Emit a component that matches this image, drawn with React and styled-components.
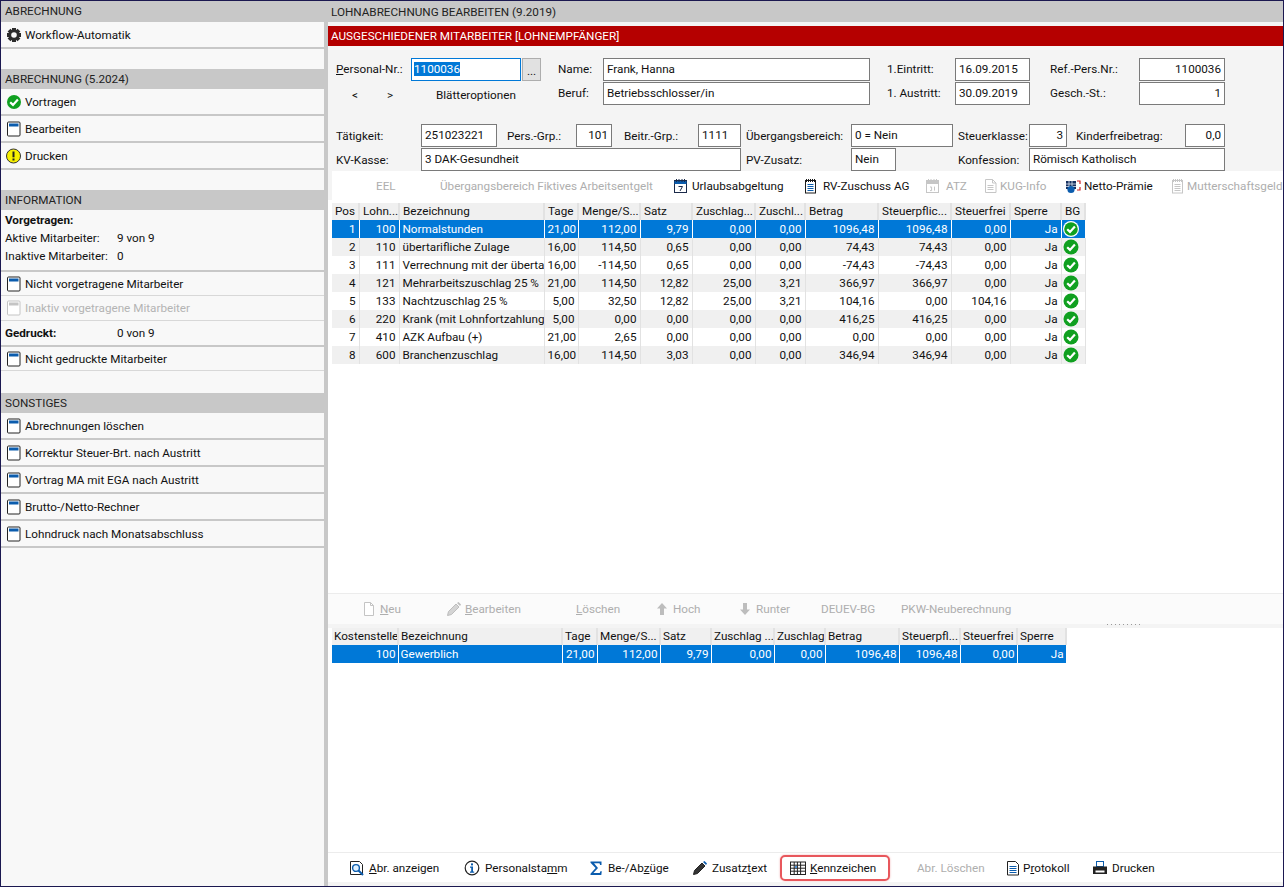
import React from "react";
import styled, { createGlobalStyle } from "styled-components";

const GlobalStyle = createGlobalStyle`
  html, body {
    margin: 0;
    padding: 0;
    height: 100%;
    overflow: hidden;
    background: #fff;
  }
  * { box-sizing: border-box; }
  #root { height: 100%; }
  u { text-underline-offset: 1px; }
`;

const Frame = styled.div`
  width: 1284px;
  height: 887px;
  display: flex;
  border: 1px solid #1b1850;
  font-family: Roboto, "Liberation Sans", sans-serif;
  font-size: 11.7px;
  color: #111;
  background: #c8c8c8;
  overflow: hidden;
`;

/* left column */
const Sidebar = styled.aside`
  width: 323px;
  flex: none;
  display: flex;
  flex-direction: column;
  background: #c8c8c8;
`;

const SideHeader = styled.div`
  height: ${(p) => p.$h || 20}px;
  flex: none;
  padding: 0 0 1px 4px;
  display: flex;
  align-items: center;
  color: #222;
`;

const SideRow = styled.div`
  height: ${(p) => p.$h || 25}px;
  flex: none;
  display: flex;
  align-items: center;
  gap: 3px;
  padding-left: 5px;
  margin-bottom: ${(p) => (p.$thin ? 1 : 2)}px;
  background: #f8f8f8;
  color: ${(p) => (p.$off ? "#b4b4b4" : "#111")};
  ${(p) => p.$thin && "box-shadow: 0 1px 0 #d8d8d8;"}
`;

const SideGap = styled.div`
  height: ${(p) => p.$h}px;
  flex: ${(p) => (p.$grow ? 1 : "none")};
  background: #f8f8f8;
`;

const InfoBlock = styled.div`
  height: 60px;
  flex: none;
  margin-bottom: 2px;
  padding: 1px 4px 0;
  background: #f8f8f8;
  display: flex;
  flex-direction: column;
`;

const InfoLine = styled.div`
  height: 18px;
  display: flex;
  align-items: center;
`;

const InfoKey = styled.span`
  width: ${(p) => p.$w || 112}px;
  font-weight: ${(p) => (p.$bold ? 700 : 400)};
`;

const GedrucktRow = styled(SideRow)`
  gap: 0;
  padding-left: 4px;
`;

/* right column */
const Main = styled.main`
  flex: 1;
  min-width: 0;
  display: flex;
  flex-direction: column;
`;

const MainTitle = styled.div`
  height: 21px;
  flex: none;
  padding-left: 7px;
  display: flex;
  align-items: center;
  color: #222;
`;

const Panel = styled.div`
  flex: 1;
  min-height: 0;
  margin-left: 4px;
  display: flex;
  flex-direction: column;
  background: #f4f4f4;
  padding-top: 4px;
`;

const RedBar = styled.div`
  height: 20px;
  flex: none;
  padding-left: 3px;
  display: flex;
  align-items: center;
  background: #b50000;
  color: #fff;
`;

const FormArea = styled.div`
  flex: none;
  height: 125px;
  padding: 8px 0 0 8px;
  border-top: 4px solid #f8f8f8;
  display: flex;
  flex-direction: column;
  gap: 1px;
`;

const Label = styled.span`
  flex: none;
  width: ${(p) => p.$w}px;
  white-space: nowrap;
`;

const FieldRow = styled.div`
  height: 23px;
  display: flex;
  align-items: center;

  ${Label} {
    margin-top: ${(p) => (p.$up ? -2 : 1)}px;
  }
`;

const Rule = styled.div`
  height: 1px;
  margin: 8px 0 9px -4px;
  background: #ececec;
`;

const Field = styled.div`
  flex: none;
  width: ${(p) => p.$w}px;
  height: 23px;
  margin-right: ${(p) => p.$mr || 0}px;
  padding: 0 3px 2px;
  display: flex;
  align-items: center;
  justify-content: ${(p) => (p.$right ? "flex-end" : "flex-start")};
  border: 1px solid ${(p) => (p.$focus ? "#0078d7" : "#7a7a7a")};
  background: #fff;
  white-space: nowrap;
`;

const Selected = styled.span`
  background: #0078d7;
  color: #fff;
  margin-left: -1px;
`;

const DotsButton = styled.div`
  flex: none;
  width: 19px;
  height: 23px;
  margin: 0 17px 0 1px;
  border: 1px solid #adadad;
  background: #e1e1e1;
  display: flex;
  align-items: flex-end;
  justify-content: center;
  padding-bottom: 4px;
  line-height: 10px;
`;

const PageLink = styled.span`
  flex: none;
  width: ${(p) => p.$w}px;
  margin-top: 3px;
  white-space: nowrap;
`;

const ToolBar = styled.div`
  flex: none;
  height: ${(p) => p.$h}px;
  margin-left: ${(p) => p.$ml || 0}px;
  padding-left: ${(p) => p.$pl}px;
  display: flex;
  align-items: center;
  background: ${(p) => p.$bg || "#fff"};
  white-space: nowrap;
  overflow: hidden;
  ${(p) => p.$line && "border-top: 1px solid #ececec;"}
`;

const ToolItem = styled.div`
  flex: none;
  display: flex;
  align-items: center;
  gap: ${(p) => p.$gap ?? 3}px;
  width: ${(p) => p.$w}px;
  color: ${(p) => (p.$off ? "#aeaeae" : "#111")};
`;

const MarkedItem = styled(ToolItem)`
  height: 26px;
  margin: 0 27px 0 -9px;
  padding-left: 8px;
  width: 110px;
  border: 2px solid #e8575c;
  border-radius: 5px;
  box-shadow: 0 0 2px rgba(232, 87, 92, 0.5);
`;

const GridArea = styled.div`
  flex: ${(p) => (p.$grow ? 1 : "none")};
  height: ${(p) => p.$h || "auto"};
  padding: ${(p) => p.$pad};
  background: #fff;
`;

const Table = styled.table`
  table-layout: fixed;
  border-collapse: collapse;
  width: ${(p) => p.$w}px;
  font-size: 11.7px;
`;

const Th = styled.th`
  height: 17px;
  padding: 0 1px 1px ${(p) => (p.$tight ? 2 : 3)}px;
  font-weight: 400;
  text-align: left;
  background: #f0f0f0;
  border-right: 2px solid #e2e2e2;
  overflow: hidden;
  white-space: nowrap;
`;

const Td = styled.td`
  height: 18px;
  padding: 0 ${(p) => (p.$left ? 0 : p.$tight ? 2 : 3)}px 0 ${(p) => (p.$tight ? 2 : 3)}px;
  text-align: ${(p) => (p.$left ? "left" : "right")};
  border-right: 1px solid ${(p) => (p.$sel ? "#fff" : "#e2e2e2")};
  overflow: hidden;
  white-space: nowrap;
`;

const IconCell = styled(Td)`
  padding: 0 0 0 1px;
  line-height: 0;
`;

const Tr = styled.tr`
  background: ${(p) => (p.$sel ? "#0078d7" : p.$alt ? "#f0f0f0" : "#fff")};
  color: ${(p) => (p.$sel ? "#fff" : "#111")};
`;

const Splitter = styled.div`
  flex: none;
  height: 4px;
  background: #f4f4f4;
  display: flex;
  justify-content: flex-end;
  padding-right: 140px;
`;

const Grip = styled.div`
  width: 36px;
  height: 1px;
  background-image: linear-gradient(90deg, #999 1px, transparent 1px);
  background-size: 4px 1px;
`;

const BottomGap = styled.div`
  flex: none;
  height: 4px;
  background: #f4f4f4;
`;

/* icons */
const IconSvg = styled.svg`
  flex: none;
  display: block;
`;

const Svg = ({ children }) => (
  <IconSvg width={16} height={16} viewBox="0 0 16 16">
    {children}
  </IconSvg>
);

const WindowIcon = ({ off }) => (
  <Svg>
    <rect x="1.5" y="1" width="12.5" height="14" rx="1" fill="#fff" stroke={off ? "#c4c4c4" : "#222"} />
    <rect x="3" y="2.5" width="9.5" height="3" fill={off ? "#c4c4c4" : "#0b5cad"} />
  </Svg>
);

const CheckIcon = ({ ring, big }) => (
  <Svg>
    {ring && <circle cx="8" cy="8" r="8" fill="#fff" />}
    <circle cx="8" cy="8" r={ring ? 6.8 : big ? 7.5 : 7} fill="#10a020" />
    <path d="M4.2 8.2 7 10.9 11.9 5.5" fill="none" stroke="#fff" strokeWidth="2.2" />
  </Svg>
);

const WarnIcon = () => (
  <Svg>
    <circle cx="7.5" cy="8" r="7" fill="#f7f000" stroke="#333" />
    <rect x="6.5" y="3.5" width="2" height="5.8" fill="#222" />
    <rect x="6.5" y="10.5" width="2" height="2" fill="#222" />
  </Svg>
);

const GearIcon = () => (
  <Svg>
    <g fill="#2b2b2b">
      {[0, 45, 90, 135].map((r) => (
        <rect key={r} x="6" y="1" width="4" height="14" transform={`rotate(${r} 8 8)`} />
      ))}
      <circle cx="8" cy="8" r="5.4" />
    </g>
    <circle cx="8" cy="8" r="2.8" fill="#f8f8f8" />
  </Svg>
);

const CalendarIcon = ({ off }) => {
  const c = off ? "#c6c6c6" : "#1b2a4a";
  return (
    <Svg>
      <rect x="1.5" y="2.5" width="12" height="12" fill="#fff" stroke={c} />
      <rect x="1.5" y="3" width="12" height="3" fill={off ? "#c6c6c6" : "#0b5cad"} />
      <path d="M3.5 1v3M6 1v3M9 1v3M11.5 1v3" stroke={c} />
      {off ? (
        <path d="M5 9h1.6v3.6H5M9.5 8.6v4" stroke={c} fill="none" />
      ) : (
        <path d="M5.5 8.5h4L7 13" stroke={c} fill="none" />
      )}
    </Svg>
  );
};

const NoteIcon = ({ off, blue }) => {
  const c = off ? "#c6c6c6" : "#1b1b1b";
  return (
    <Svg>
      <rect x="2.5" y="2.5" width="10" height="12.5" fill="#fff" stroke={c} />
      <path d="M3.5 1v3M5.5 1v3M7.5 1v3M9.5 1v3M11.5 1v3" stroke={c} />
      <path d="M4.5 6.5h6M4.5 8.5h6M4.5 10.5h6M4.5 12.5h6" stroke={off ? c : blue ? "#0b5cad" : c} />
    </Svg>
  );
};

const PageIcon = ({ off }) => {
  const c = off ? "#c6c6c6" : "#222";
  return (
    <Svg>
      <path d="M2.5 1.5h7l3.5 3.5v9.5H2.5z" fill="#fff" stroke={c} />
      <path d="M9.5 1.5V5H13M4.5 7.5h6M4.5 9.5h6M4.5 11.5h6" fill="none" stroke={c} />
    </Svg>
  );
};

const NettoIcon = () => (
  <Svg>
    <rect x="1" y="3" width="10" height="8" fill="#16305f" />
    <path d="M4 3v8M7 3v8M1 6h10M1 8.5h10" stroke="#dfe8f5" strokeWidth="0.8" />
    <circle cx="6" cy="11.5" r="3.6" fill="#0b5cad" />
    <path d="M12 3h3v3M15 9v3h-3" stroke="#c22" strokeWidth="1.2" fill="none" />
  </Svg>
);

const NewPageIcon = () => (
  <Svg>
    <path d="M3.5 1.5h6l3 3v10h-9z" fill="#fff" stroke="#c4c4c4" />
    <path d="M9.5 1.5v3h3" fill="none" stroke="#c4c4c4" />
  </Svg>
);

const PencilIcon = ({ off }) => (
  <Svg>
    <path d="M1.5 14.5l1-4 7.5-7.5 3 3-7.5 7.5z" fill={off ? "#d4d4d4" : "#333"} stroke={off ? "#bdbdbd" : "#222"} />
    <path d="M11 2l1.5-1 2.5 2.5-1 1.5z" fill={off ? "#bdbdbd" : "#0b5cad"} />
  </Svg>
);

const ArrowIcon = ({ down }) => (
  <Svg>
    <path
      d="M8 2 13 7.5H10V14H6V7.5H3z"
      fill="#bdbdbd"
      transform={down ? "rotate(180 8 8)" : undefined}
    />
  </Svg>
);

const PreviewIcon = () => (
  <Svg>
    <path d="M1.5 1.5h9l3 3v10h-12z" fill="#fff" stroke="#222" />
    <circle cx="7" cy="8" r="3.4" fill="#dff0ff" stroke="#0b5cad" strokeWidth="1.4" />
    <path d="M9.5 10.5 14 15" stroke="#0b5cad" strokeWidth="2" />
  </Svg>
);

const InfoIcon = () => (
  <Svg>
    <circle cx="8" cy="8" r="6.8" fill="#fff" stroke="#222" strokeWidth="1.2" />
    <rect x="7" y="3.4" width="2" height="2" fill="#0b5cad" />
    <path d="M6 6.6h3v5h1.2v1.2H6v-1.2h1.2V7.8H6z" fill="#0b5cad" />
  </Svg>
);

const SigmaIcon = () => (
  <Svg>
    <path d="M1.5 1.5h11v3.4h-1.4l-.6-1.6H5l4 4.7-4.6 5h6.3l.7-1.8h1.4l-.5 3.8H1.5v-1.2L6.6 8 1.5 2.7z" fill="#0b5cad" />
  </Svg>
);

const GridIcon = () => (
  <Svg>
    <rect x="0.5" y="2" width="15" height="12.5" fill="#fff" stroke="#222" />
    <path d="M1 5.2h14M1 8.2h14M1 11.2h14M4.2 2v12.5M7.4 2v12.5M10.6 2v12.5" stroke="#222" />
    <rect x="5" y="6" width="2" height="2" fill="#4a90d9" />
  </Svg>
);

const ReportIcon = () => (
  <Svg>
    <path d="M2.5 1.5h8l3 3v10.5h-11z" fill="#fff" stroke="#222" />
    <path d="M4.5 6.5h7M4.5 8.5h7M4.5 10.5h7M4.5 12.5h7" stroke="#0b5cad" />
  </Svg>
);

const PrintIcon = () => (
  <Svg>
    <rect x="4.5" y="1.5" width="7" height="5" fill="#fff" stroke="#0b5cad" />
    <rect x="1" y="6.5" width="14" height="7.5" fill="#222" />
    <rect x="3.5" y="10.5" width="9" height="2" fill="#fff" />
  </Svg>
);

/* table data */
const lohnCols = [27, 40, 145, 34, 62, 52, 63, 50, 73, 73, 59, 51, 24];
const lohnHead = ["Pos", "Lohn...", "Bezeichnung", "Tage", "Menge/S...", "Satz", "Zuschlag...", "Zuschl...", "Betrag", "Steuerpflic...", "Steuerfrei", "Sperre", "BG"];
const lohnRows = [
  ["1", "100", "Normalstunden", "21,00", "112,00", "9,79", "0,00", "0,00", "1096,48", "1096,48", "0,00", "Ja"],
  ["2", "110", "übertarifliche Zulage", "16,00", "114,50", "0,65", "0,00", "0,00", "74,43", "74,43", "0,00", "Ja"],
  ["3", "111", "Verrechnung mit der übertariflichen Zulage", "16,00", "-114,50", "0,65", "0,00", "0,00", "-74,43", "-74,43", "0,00", "Ja"],
  ["4", "121", "Mehrarbeitszuschlag 25 %", "21,00", "114,50", "12,82", "25,00", "3,21", "366,97", "366,97", "0,00", "Ja"],
  ["5", "133", "Nachtzuschlag 25 %", "5,00", "32,50", "12,82", "25,00", "3,21", "104,16", "0,00", "104,16", "Ja"],
  ["6", "220", "Krank (mit Lohnfortzahlung)", "5,00", "0,00", "0,00", "0,00", "0,00", "416,25", "416,25", "0,00", "Ja"],
  ["7", "410", "AZK Aufbau (+)", "21,00", "2,65", "0,00", "0,00", "0,00", "0,00", "0,00", "0,00", "Ja"],
  ["8", "600", "Branchenzuschlag", "16,00", "114,50", "3,03", "0,00", "0,00", "346,94", "346,94", "0,00", "Ja"],
];

const kostCols = [66, 164, 35, 63, 51, 63, 51, 74, 61, 57, 49];
const kostHead = ["Kostenstelle", "Bezeichnung", "Tage", "Menge/S...", "Satz", "Zuschlag ...", "Zuschlag", "Betrag", "Steuerpfl...", "Steuerfrei", "Sperre"];
const kostRow = ["100", "Gewerblich", "21,00", "112,00", "9,79", "0,00", "0,00", "1096,48", "1096,48", "0,00", "Ja"];

const sum = (a) => a.reduce((x, y) => x + y, 0);

const Colgroup = ({ cols }) => (
  <colgroup>
    {cols.map((w, i) => (
      <col key={i} width={w} />
    ))}
  </colgroup>
);

export default function App() {
  return (
    <>
      <GlobalStyle />
      <Frame>
        <Sidebar>
          <SideHeader $h={21}>ABRECHNUNG</SideHeader>
          <SideRow><GearIcon /> Workflow-Automatik</SideRow>
          <SideGap $h={20} />
          <SideHeader>ABRECHNUNG (5.2024)</SideHeader>
          <SideRow><CheckIcon /> Vortragen</SideRow>
          <SideRow><WindowIcon /> Bearbeiten</SideRow>
          <SideRow><WarnIcon /> Drucken</SideRow>
          <SideGap $h={20} />
          <SideHeader>INFORMATION</SideHeader>
          <InfoBlock>
            <InfoLine><InfoKey $bold>Vorgetragen:</InfoKey></InfoLine>
            <InfoLine><InfoKey>Aktive Mitarbeiter:</InfoKey> 9 von 9</InfoLine>
            <InfoLine><InfoKey>Inaktive Mitarbeiter:</InfoKey> 0</InfoLine>
          </InfoBlock>
          <SideRow $h={23} $thin><WindowIcon /> Nicht vorgetragene Mitarbeiter</SideRow>
          <SideRow $h={24} $thin $off><WindowIcon off /> Inaktiv vorgetragene Mitarbeiter</SideRow>
          <GedrucktRow $h={24}>
            <InfoKey $bold>Gedruckt:</InfoKey> 0 von 9
          </GedrucktRow>
          <SideRow $h={23} $thin><WindowIcon /> Nicht gedruckte Mitarbeiter</SideRow>
          <SideGap $h={22} />
          <SideHeader>SONSTIGES</SideHeader>
          <SideRow><WindowIcon /> Abrechnungen löschen</SideRow>
          <SideRow><WindowIcon /> Korrektur Steuer-Brt. nach Austritt</SideRow>
          <SideRow><WindowIcon /> Vortrag MA mit EGA nach Austritt</SideRow>
          <SideRow><WindowIcon /> Brutto-/Netto-Rechner</SideRow>
          <SideRow><WindowIcon /> Lohndruck nach Monatsabschluss</SideRow>
          <SideGap $grow />
        </Sidebar>

        <Main>
          <MainTitle>LOHNABRECHNUNG BEARBEITEN (9.2019)</MainTitle>
          <Panel>
            <RedBar>AUSGESCHIEDENER MITARBEITER [LOHNEMPFÄNGER]</RedBar>
            <FormArea>
              <FieldRow $up>
                <Label $w={75}><u>P</u>ersonal-Nr.:</Label>
                <Field $w={110} $focus><Selected>1100036</Selected></Field>
                <DotsButton>...</DotsButton>
                <Label $w={45}>Name:</Label>
                <Field $w={267} $mr={17}>Frank, Hanna</Field>
                <Label $w={68}>1.Eintritt:</Label>
                <Field $w={75} $mr={20}>16.09.2015</Field>
                <Label $w={89}>Ref.-Pers.Nr.:</Label>
                <Field $w={86} $right>1100036</Field>
              </FieldRow>
              <FieldRow $up>
                <PageLink $w={16} />
                <PageLink $w={35}>&lt;</PageLink>
                <PageLink $w={49}>&gt;</PageLink>
                <PageLink $w={122}>Blätteroptionen</PageLink>
                <Label $w={45}>Beruf:</Label>
                <Field $w={267} $mr={17}>Betriebsschlosser/in</Field>
                <Label $w={68}>1. Austritt:</Label>
                <Field $w={75} $mr={20}>30.09.2019</Field>
                <Label $w={89}>Gesch.-St.:</Label>
                <Field $w={86} $right>1</Field>
              </FieldRow>
              <Rule />
              <FieldRow>
                <Label $w={85}>Tätigkeit:</Label>
                <Field $w={76} $mr={10}>251023221</Field>
                <Label $w={69}>Pers.-Grp.:</Label>
                <Field $w={36} $mr={12} $right>101</Field>
                <Label $w={74}>Beitr.-Grp.:</Label>
                <Field $w={43} $mr={5}>1111</Field>
                <Label $w={105}>Übergangsbereich:</Label>
                <Field $w={102} $mr={5}>0 = Nein</Field>
                <Label $w={71}>Steuerklasse:</Label>
                <Field $w={38} $mr={9} $right>3</Field>
                <Label $w={109}>Kinderfreibetrag:</Label>
                <Field $w={40} $right>0,0</Field>
              </FieldRow>
              <FieldRow>
                <Label $w={85}>KV-Kasse:</Label>
                <Field $w={320} $mr={5}>3 DAK-Gesundheit</Field>
                <Label $w={105}>PV-Zusatz:</Label>
                <Field $w={45} $mr={62}>Nein</Field>
                <Label $w={71}>Konfession:</Label>
                <Field $w={196}>Römisch Katholisch</Field>
              </FieldRow>
            </FormArea>

            <ToolBar $h={29} $pl={44} $ml={4}>
              <ToolItem $w={64} $off>EEL</ToolItem>
              <ToolItem $w={233} $off>Übergangsbereich Fiktives Arbeitsentgelt</ToolItem>
              <ToolItem $w={130} $gap={3}><CalendarIcon /> Urlaubsabgeltung</ToolItem>
              <ToolItem $w={122} $gap={4}><NoteIcon blue /> RV-Zuschuss AG</ToolItem>
              <ToolItem $w={58} $off $gap={5}><CalendarIcon off /> ATZ</ToolItem>
              <ToolItem $w={82} $off $gap={1}><PageIcon off /> KUG-Info</ToolItem>
              <ToolItem $w={105}><NettoIcon /> Netto-Prämie</ToolItem>
              <ToolItem $w={120} $off $gap={1}><NoteIcon off /> Mutterschaftsgeld</ToolItem>
            </ToolBar>

            <GridArea $grow $pad="3px 0 0 4px">
              <Table $w={sum(lohnCols)}>
                <Colgroup cols={lohnCols} />
                <thead>
                  <tr>{lohnHead.map((h) => <Th key={h}>{h}</Th>)}</tr>
                </thead>
                <tbody>
                  {lohnRows.map((row, i) => (
                    <Tr key={row[0]} $sel={i === 0} $alt={i % 2 === 1}>
                      {row.map((c, j) => (
                        <Td key={j} $left={j === 2} $sel={i === 0}>{c}</Td>
                      ))}
                      <IconCell $sel={i === 0}><CheckIcon big ring={i === 0} /></IconCell>
                    </Tr>
                  ))}
                </tbody>
              </Table>
            </GridArea>

            <ToolBar $h={31} $pl={33} $line $bg="#fbfbfb">
              <ToolItem $w={85} $off><NewPageIcon /> <span><u>N</u>eu</span></ToolItem>
              <ToolItem $w={130} $off><PencilIcon off /> <span><u>B</u>earbeiten</span></ToolItem>
              <ToolItem $w={78} $off><span><u>L</u>öschen</span></ToolItem>
              <ToolItem $w={83} $off><ArrowIcon /> Hoch</ToolItem>
              <ToolItem $w={84} $off><ArrowIcon down /> Runter</ToolItem>
              <ToolItem $w={80} $off>DEUEV-BG</ToolItem>
              <ToolItem $w={130} $off>PKW-Neuberechnung</ToolItem>
            </ToolBar>
            <Splitter><Grip /></Splitter>

            <GridArea $h="224px" $pad="0 0 0 4px">
              <Table $w={sum(kostCols)}>
                <Colgroup cols={kostCols} />
                <thead>
                  <tr>{kostHead.map((h) => <Th key={h} $tight>{h}</Th>)}</tr>
                </thead>
                <tbody>
                  <Tr $sel>
                    {kostRow.map((c, j) => (
                      <Td key={j} $left={j === 1} $sel $tight>{c}</Td>
                    ))}
                  </Tr>
                </tbody>
              </Table>
            </GridArea>

            <ToolBar $h={30} $pl={21} $line>
              <ToolItem $w={115} $gap={4}><PreviewIcon /> <span><u>A</u>br. anzeigen</span></ToolItem>
              <ToolItem $w={125} $gap={5}><InfoIcon /> <span>Personalsta<u>m</u>m</span></ToolItem>
              <ToolItem $w={103} $gap={3}><SigmaIcon /> <span>Be-/Ab<u>z</u>üge</span></ToolItem>
              <ToolItem $w={97} $gap={4}><PencilIcon /> <span>Zusatz<u>t</u>ext</span></ToolItem>
              <MarkedItem $gap={4}><GridIcon /> <span><u>K</u>ennzeichen</span></MarkedItem>
              <ToolItem $w={88} $off>Abr. Löschen</ToolItem>
              <ToolItem $w={87} $gap={2}><ReportIcon /> <span>P<u>r</u>otokoll</span></ToolItem>
              <ToolItem $w={80} $gap={4}><PrintIcon /> Drucken</ToolItem>
            </ToolBar>
            <BottomGap />
          </Panel>
        </Main>
      </Frame>
    </>
  );
}
